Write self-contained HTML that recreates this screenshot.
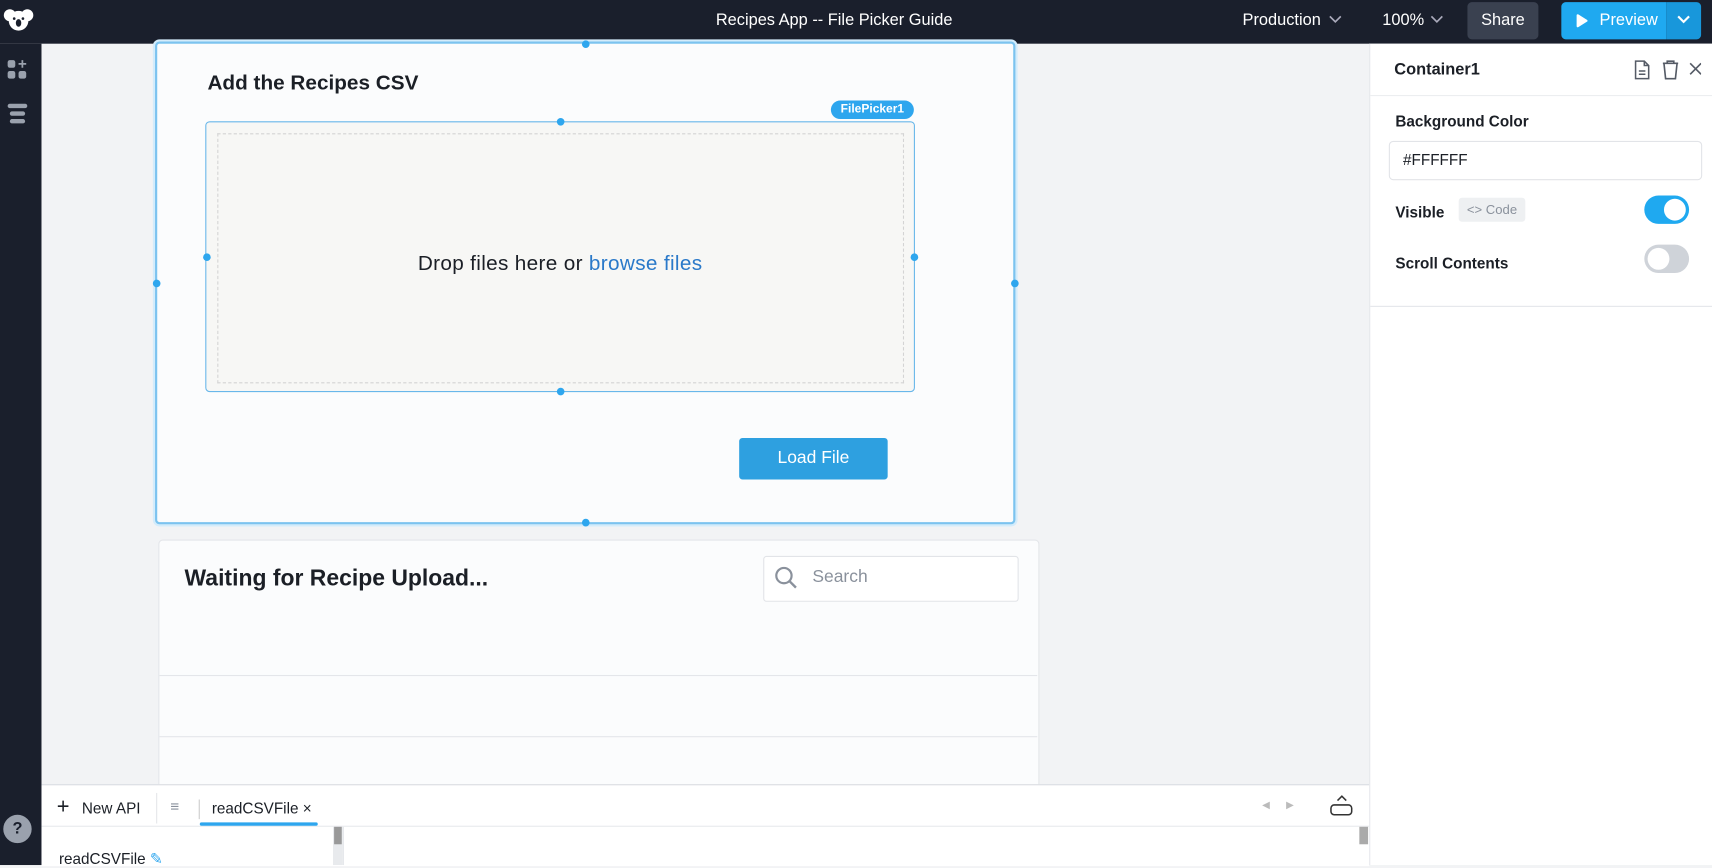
<!DOCTYPE html>
<html><head><meta charset="utf-8"><style>
html,body{margin:0;padding:0;width:1712px;height:865px;overflow:hidden;background:#f2f3f5;font-family:"Liberation Sans",sans-serif}
#w{position:absolute;left:0;top:0;width:1568px;height:792px;transform:scale(1.09184,1.0922);transform-origin:0 0;background:#f2f3f5}
.a{position:absolute}
.dot{position:absolute;width:7px;height:7px;border-radius:50%;background:#2ea6ee;margin:-3.5px 0 0 -3.5px}
</style></head><body><div id="w">
<div class="a" style="left:0;top:0;width:1568px;height:40px;background:#1a1f2c"></div>
<div class="a" style="left:0;top:40px;width:38px;height:752px;background:#1a1f2c"></div>
<svg class="a" style="left:3px;top:6px" width="28" height="24" viewBox="0 0 28 24"><circle cx="6" cy="8" r="5.5" fill="#fff"/><circle cx="22" cy="8" r="5.5" fill="#fff"/><ellipse cx="14" cy="13" rx="9" ry="9" fill="#fff"/><ellipse cx="14" cy="15" rx="2.5" ry="3.5" fill="#1a1f2c"/><circle cx="10" cy="11" r="1.2" fill="#1a1f2c"/><circle cx="18" cy="11" r="1.2" fill="#1a1f2c"/></svg>
<svg class="a" style="left:6px;top:54px" width="20" height="20"><rect x="1" y="1" width="7" height="7" rx="2" fill="#9aa1ad"/><rect x="1" y="11" width="7" height="7" rx="2" fill="#9aa1ad"/><rect x="11" y="11" width="7" height="7" rx="2" fill="#9aa1ad"/><path d="M14.5 1v7M11 4.5h7" stroke="#9aa1ad" stroke-width="1.6"/></svg>
<svg class="a" style="left:6px;top:93px" width="20" height="22"><rect x="1" y="2" width="18" height="4" rx="2" fill="#9aa1ad"/><rect x="3" y="9" width="14" height="4" rx="2" fill="#9aa1ad"/><rect x="3" y="16" width="14" height="4" rx="2" fill="#9aa1ad"/></svg>
<div class="a" style="left:3px;top:746px;width:26px;height:26px;border-radius:50%;background:#9aa1ad;color:#1a1f2c;font-weight:bold;font-size:15px;text-align:center;line-height:26px">?</div>
<div class="a" style="left:0;width:1528px;top:9px;text-align:center;color:#fff;font-size:15px;line-height:20px">Recipes App -- File Picker Guide</div>
<div class="a" style="left:1138px;top:9px;color:#fff;font-size:15px;line-height:20px">Production</div>
<svg class="a" style="left:1216px;top:13px" width="14" height="10"><path d="M2 2l5 5 5-5" fill="none" stroke="#aab" stroke-width="1.5"/></svg>
<div class="a" style="left:1266px;top:9px;color:#fff;font-size:15px;line-height:20px">100%</div>
<svg class="a" style="left:1309px;top:13px" width="14" height="10"><path d="M2 2l5 5 5-5" fill="none" stroke="#aab" stroke-width="1.5"/></svg>
<div class="a" style="left:1344px;top:2px;width:65px;height:34px;border-radius:4px;background:#3a4150;color:#fff;font-size:15px;line-height:34px;text-align:center">Share</div>
<div class="a" style="left:1430px;top:2px;width:96px;height:34px;border-radius:4px 0 0 4px;background:#1fa9f0"></div>
<div class="a" style="left:1526px;top:2px;width:32px;height:34px;border-radius:0 4px 4px 0;background:#1897db"></div>
<svg class="a" style="left:1535px;top:13px" width="14" height="10"><path d="M2 2l5 5 5-5" fill="none" stroke="#fff" stroke-width="2"/></svg>
<svg class="a" style="left:1443px;top:12px" width="12" height="14"><path d="M2 2L10 7L2 12Z" fill="#fff" stroke="#fff" stroke-linejoin="round" stroke-width="2"/></svg>
<div class="a" style="left:1465px;top:9px;color:#fff;font-size:15px;line-height:20px">Preview</div>

<div class="a" style="left:142px;top:38px;width:784px;height:438px;background:#fbfcfd;border:2px solid #7cc3ef;border-radius:4px;box-shadow:0 0 0 2px #d4ecfb"></div>
<div class="a" style="left:190px;top:66px;font-size:19px;font-weight:bold;color:#1b1f26">Add the Recipes CSV</div>
<div class="a" style="left:188px;top:111px;width:648px;height:246px;background:#f7f7f5;border:1px solid #69b7ea;border-radius:4px"></div>
<div class="a" style="left:199px;top:122px;width:627px;height:227px;border:1px dashed #d4d4d4"></div>
<div class="a" style="left:761px;top:92px;width:76px;height:17px;border-radius:9px;background:#2ea6ee;color:#fff;font-size:11px;font-weight:bold;text-align:center;line-height:17px">FilePicker1</div>
<div class="a" style="left:188px;width:650px;top:231px;text-align:center;font-size:19px;color:#1b1f26;letter-spacing:0.3px">Drop files here or <span style="color:#2a79c9">browse files</span></div>
<div class="a" style="left:677px;top:401px;width:136px;height:38px;border-radius:3px;background:#2ea0e0;color:#fff;font-size:16px;text-align:center;line-height:38px">Load File</div>
<div class="dot" style="left:536px;top:40px"></div><div class="dot" style="left:536px;top:478px"></div>
<div class="dot" style="left:143px;top:259px"></div><div class="dot" style="left:929px;top:259px"></div>
<div class="dot" style="left:513px;top:111px"></div><div class="dot" style="left:513px;top:358px"></div>
<div class="dot" style="left:189px;top:235px"></div><div class="dot" style="left:837px;top:235px"></div>

<div class="a" style="left:145px;top:494px;width:805px;height:230px;background:#fbfcfd;border:1px solid #e4e6ea;border-radius:4px"></div>
<div class="a" style="left:169px;top:518px;font-size:21px;font-weight:bold;color:#1b1f26">Waiting for Recipe Upload...</div>
<div class="a" style="left:699px;top:509px;width:232px;height:40px;border:1px solid #e2e4e8;border-radius:3px;background:#fff"></div>
<svg class="a" style="left:709px;top:518px" width="22" height="22"><circle cx="9" cy="9" r="7" fill="none" stroke="#8a919c" stroke-width="2"/><path d="M14 14L20 20" stroke="#8a919c" stroke-width="2.2"/></svg>
<div class="a" style="left:744px;top:520px;font-size:16px;color:#8a919c">Search</div>
<div class="a" style="left:146px;top:618px;width:804px;height:1px;background:#e4e6ea"></div>
<div class="a" style="left:146px;top:674px;width:804px;height:1px;background:#e4e6ea"></div>

<div class="a" style="left:1254px;top:40px;width:314px;height:752px;background:#fff;border-left:1px solid #e4e6ea"></div>
<div class="a" style="left:1277px;top:55px;font-size:15px;font-weight:bold;color:#1b1f26">Container1</div>
<svg class="a" style="left:1496px;top:54px" width="62" height="20"><path d="M2 2h8l4 4v12H2Z M10 2v4h4 M5 11h6M5 14h6" fill="none" stroke="#555b66" stroke-width="1.4"/><path d="M27 4h14M31 4V2h6v2M28 4l1.5 14h9L40 4" fill="none" stroke="#555b66" stroke-width="1.5"/><path d="M52 4l10 10M62 4L52 14" stroke="#555b66" stroke-width="1.5"/></svg>
<div class="a" style="left:1255px;top:87px;width:313px;height:1px;background:#eceef0"></div>
<div class="a" style="left:1278px;top:103px;font-size:14px;font-weight:bold;color:#1b1f26">Background Color</div>
<div class="a" style="left:1272px;top:129px;width:285px;height:34px;border:1px solid #e2e4e8;border-radius:4px"></div>
<div class="a" style="left:1285px;top:138px;font-size:14px;color:#1b1f26">#FFFFFF</div>
<div class="a" style="left:1278px;top:186px;font-size:14px;font-weight:bold;color:#1b1f26">Visible</div>
<div class="a" style="left:1336px;top:181px;width:61px;height:22px;border-radius:3px;background:#eef0f2;color:#8a919c;font-size:12px;line-height:22px;text-align:center">&lt;&gt; Code</div>
<div class="a" style="left:1506px;top:179px;width:41px;height:26px;border-radius:13px;background:#1fa9f0"></div>
<div class="a" style="left:1524px;top:182px;width:20px;height:20px;border-radius:50%;background:#fff"></div>
<div class="a" style="left:1278px;top:233px;font-size:14px;font-weight:bold;color:#1b1f26">Scroll Contents</div>
<div class="a" style="left:1506px;top:224px;width:41px;height:26px;border-radius:13px;background:#cfd3d9"></div>
<div class="a" style="left:1509px;top:227px;width:20px;height:20px;border-radius:50%;background:#fff"></div>
<div class="a" style="left:1255px;top:280px;width:313px;height:1px;background:#e4e6ea"></div>

<div class="a" style="left:38px;top:718px;width:1216px;height:74px;background:#fff;border-top:1px solid #d8dbe0"></div>
<div class="a" style="left:38px;top:756px;width:1216px;height:1px;background:#e8eaed"></div>
<div class="a" style="left:52px;top:728px;font-size:20px;color:#1b1f26">+</div>
<div class="a" style="left:75px;top:732px;font-size:14px;color:#1b1f26">New API</div>
<div class="a" style="left:143px;top:726px;width:1px;height:28px;background:#e4e6ea"></div>
<div class="a" style="left:156px;top:730px;font-size:14px;color:#8a919c">&#8801;</div>
<div class="a" style="left:182px;top:732px;width:1px;height:18px;background:#ccc"></div>
<div class="a" style="left:194px;top:732px;font-size:14px;color:#1b1f26">readCSVFile &#215;</div>
<div class="a" style="left:183px;top:753px;width:108px;height:3px;background:#2ea6ee;border-radius:2px"></div>
<div class="a" style="left:1156px;top:732px;font-size:9px;color:#bbb">&#9664; &nbsp;&nbsp;&nbsp;&nbsp; &#9654;</div>
<svg class="a" style="left:1217px;top:727px" width="24" height="22"><path d="M8 6l4-4 4 4" fill="none" stroke="#333" stroke-width="1.4"/><rect x="2" y="10" width="19" height="9" rx="3" fill="none" stroke="#333" stroke-width="1.4"/></svg>
<div class="a" style="left:305px;top:757px;width:9px;height:35px;background:#e8eaed"></div>
<div class="a" style="left:306px;top:757px;width:7px;height:16px;background:#999"></div>
<div class="a" style="left:314px;top:757px;width:1px;height:35px;background:#e4e6ea"></div>
<div class="a" style="left:1245px;top:757px;width:8px;height:16px;background:#aaa"></div>
<div class="a" style="left:54px;top:778px;font-size:14px;color:#1b1f26">readCSVFile <span style="color:#2ea6ee">&#9998;</span></div>
</div></body></html>
